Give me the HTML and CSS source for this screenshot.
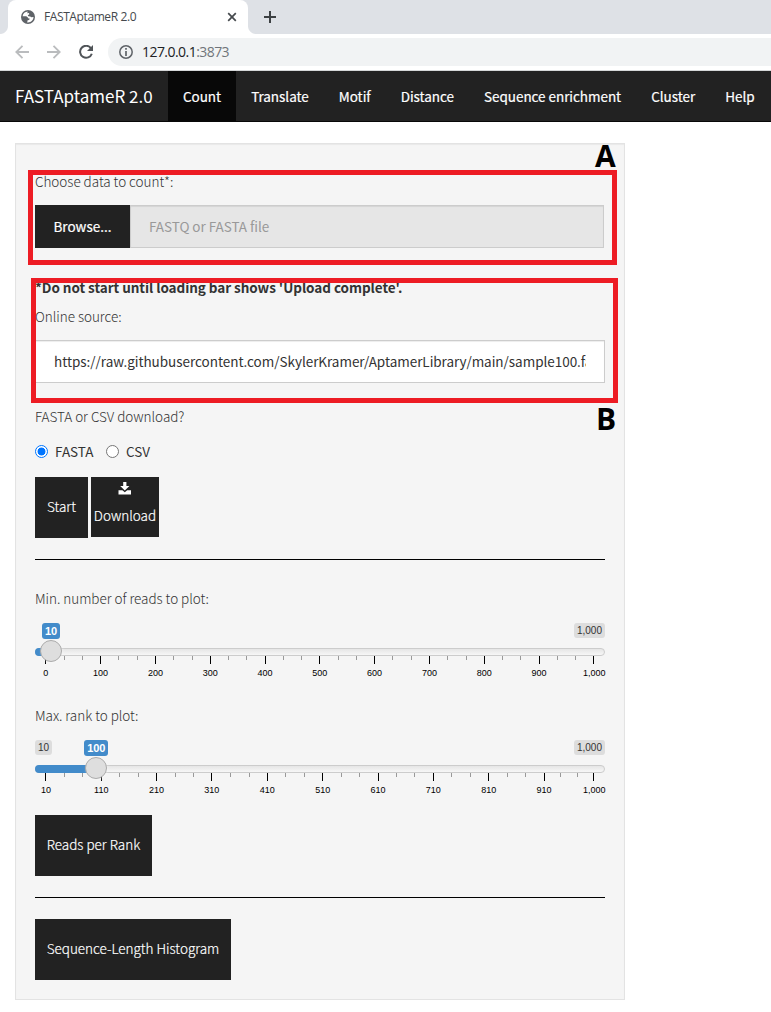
FILE: index.html
```html
<!DOCTYPE html>
<html lang="en">
<head>
<meta charset="utf-8">
<title>FASTAptameR 2.0</title>
<link rel="stylesheet" href="styles.css">
</head>
<body>
<div class="tabstrip">
  <div class="tab">
    <svg class="globe" width="14" height="14" viewBox="0 0 14 14"><circle cx="7" cy="7" r="7" fill="#5f6368"/><path d="M6.8 1.5C4 1.6 2 3.5 1.6 6.2L5.2 6.2 6.7 7.2 7 8.3 8.6 8.6 8.2 10 6.6 10.3 6.2 12.4C9.8 12.8 12.5 10.2 12.5 7L10.4 7.3 9.2 6.5 7.3 6.3 6.8 5.2 8.3 4.3 8 3 6.2 3.2Z" fill="#fff"/></svg>
    <span class="tab-title">FASTAptameR 2.0</span>
    <svg class="close" width="10" height="10" viewBox="0 0 10 10"><path d="M1.2 1.2 8.8 8.8M8.8 1.2 1.2 8.8" stroke="#45494d" stroke-width="1.7"/></svg>
  </div>
  <svg class="plus" width="12" height="12" viewBox="0 0 12 12"><path d="M6 0V12M0 6H12" stroke="#3c4043" stroke-width="2"/></svg>
</div>
<div class="toolbar">
  <svg width="14" height="14" viewBox="0 0 14 14" fill="none" stroke="#babcbe" stroke-width="1.8"><path d="M14 7H1.5M7.5 .8 1.3 7l6.2 6.2"/></svg>
  <svg class="forward" width="14" height="14" viewBox="0 0 14 14" fill="none" stroke="#babcbe" stroke-width="1.8"><path d="M0 7H12.5M6.5 .8 12.7 7l-6.2 6.2"/></svg>
  <svg class="reload" width="14" height="14" viewBox="0 0 14 14"><path d="M12 3.3A6 6 0 1 0 12.8 8.7" fill="none" stroke="#505458" stroke-width="2"/><path d="M14 0V6H8Z" fill="#505458"/></svg>
  <div class="omnibox">
    <svg width="14" height="14" viewBox="0 0 14 14"><circle cx="7" cy="7" r="6.2" fill="none" stroke="#5f6368" stroke-width="1.5"/><path d="M7 3V4.7M7 6V11" stroke="#5f6368" stroke-width="1.7"/></svg>
    <span class="url">127.0.0.1<span class="port">:3873</span></span>
  </div>
</div>
<nav class="navbar">
  <span class="brand">FASTAptameR 2.0</span>
  <a class="link active">Count</a><a class="link">Translate</a><a class="link">Motif</a><a class="link">Distance</a><a class="link">Sequence enrichment</a><a class="link">Cluster</a><a class="link">Help</a>
</nav>
<main class="well">
  <label class="label">Choose data to count*:</label>
  <div class="file">
    <span class="browse">Browse...</span>
    <span class="filename">FASTQ or FASTA file</span>
  </div>
  <strong class="note">*Do not start until loading bar shows 'Upload complete'.</strong>
  <label class="label source-label">Online source:</label>
  <div class="source"><span class="source-text">https://raw.githubusercontent.com/SkylerKramer/AptamerLibrary/main/sample100.fasta</span></div>
  <label class="label format-label">FASTA or CSV download?</label>
  <div class="radios">
    <span class="radio checked"></span><span class="radio-text fasta">FASTA</span>
    <span class="radio"></span><span class="radio-text">CSV</span>
  </div>
  <div class="actions">
    <button class="btn start">Start</button>
    <button class="btn download"><svg width="14" height="13" viewBox="0 0 14 13"><path d="M5.2 0H8.4V4H11.4L6.8 8.600 2.2 4H5.2ZM.5 8.300H4.400L6.800 10.300 9.200 8.300H13V12.5H.5Z" fill="#fff"/></svg><span>Download</span></button>
  </div>
  <hr class="rule">
  <label class="label min-label">Min. number of reads to plot:</label>
  <div class="slider">
    <div class="values"><span class="value current min-current">10</span><span class="value">1,000</span></div>
    <div class="track"><div class="fill" style="width:16px"></div><div class="handle" style="left:5px"></div></div>
    <svg class="ticks" width="580" height="26" viewBox="0 0 580 26">
      <path class="minor" d="M29.5 0v4M47.5 0v4M83.5 0v4M102.5 0v4M138.5 0v4M157.5 0v4M193.5 0v4M211.5 0v4M248.5 0v4M266.5 0v4M303.5 0v4M321.5 0v4M357.5 0v4M376.5 0v4M412.5 0v4M431.5 0v4M467.5 0v4M485.5 0v4M522.5 0v4M540.5 0v4"/>
      <path class="major" d="M10.5 0v8M65.5 0v8M120.5 0v8M175.5 0v8M230.5 0v8M284.5 0v8M339.5 0v8M394.5 0v8M449.5 0v8M504.5 0v8M558.5 0v8"/>
      <text x="10.8" y="20">0</text><text x="65.5" y="20">100</text><text x="120.5" y="20">200</text><text x="175.3" y="20">300</text><text x="230" y="20">400</text><text x="284.8" y="20">500</text><text x="339.5" y="20">600</text><text x="394.4" y="20">700</text><text x="449.3" y="20">800</text><text x="504" y="20">900</text><text x="559.2" y="20">1,000</text>
    </svg>
  </div>
  <label class="label max-label">Max. rank to plot:</label>
  <div class="slider">
    <div class="values"><span class="value">10</span><span class="value current max-current">100</span><span class="value">1,000</span></div>
    <div class="track"><div class="fill" style="width:61px"></div><div class="handle" style="left:50px"></div></div>
    <svg class="ticks" width="580" height="26" viewBox="0 0 580 26">
      <path class="minor" d="M29.5 0v4M47.5 0v4M84.5 0v4M103.5 0v4M140.5 0v4M158.5 0v4M195.5 0v4M214.5 0v4M250.5 0v4M269.5 0v4M306.5 0v4M324.5 0v4M361.5 0v4M379.5 0v4M416.5 0v4M435.5 0v4M472.5 0v4M490.5 0v4M525.5 0v4M542.5 0v4"/>
      <path class="major" d="M10.5 0v8M66.5 0v8M121.5 0v8M176.5 0v8M232.5 0v8M287.5 0v8M343.5 0v8M398.5 0v8M453.5 0v8M509.5 0v8M558.5 0v8"/>
      <text x="11" y="20">10</text><text x="66.3" y="20">110</text><text x="121.5" y="20">210</text><text x="176.7" y="20">310</text><text x="232.3" y="20">410</text><text x="287.7" y="20">510</text><text x="343" y="20">610</text><text x="398.3" y="20">710</text><text x="453.7" y="20">810</text><text x="509" y="20">910</text><text x="559.2" y="20">1,000</text>
    </svg>
  </div>
  <button class="btn ranks">Reads per Rank</button>
  <hr class="rule second">
  <button class="btn histogram">Sequence-Length Histogram</button>
</main>
<div class="callout callout-a"></div>
<div class="callout callout-b"></div>
<span class="letter letter-a">A</span>
<span class="letter letter-b">B</span>
</body>
</html>
```
FILE: styles.css
```css
* { box-sizing: border-box; }
body { margin: 0; width: 771px; height: 1012px; overflow: hidden; position: relative; background: #fff; font: 13.5px/20px "Noto Sans CJK SC", "Noto Sans", sans-serif; color: #333; white-space: nowrap; }
svg { display: block; flex: none; }

.tabstrip { height: 34px; background: #dee1e6; display: flex; align-items: flex-start; padding-left: 8px; }
.tab { position: relative; width: 240px; height: 34px; background: #fff; border-radius: 8px 8px 0 0; display: flex; align-items: center; padding-left: 13px; }
.tab::before, .tab::after { content: ""; position: absolute; bottom: 0; width: 8px; height: 8px; }
.tab::before { left: -8px; background: radial-gradient(circle at 0 0, #dee1e6 7.5px, #fff 8.5px); }
.tab::after { right: -8px; background: radial-gradient(circle at 100% 0, #dee1e6 7.5px, #fff 8.5px); }
.tab-title { font: 12px/16px "Open Sans", sans-serif; letter-spacing: -.4px; width: 183px; margin-left: 9px; color: #45494d; }
.plus { margin: 11px 0 0 16px; }

.toolbar { height: 37px; border-bottom: 1px solid #d5d7d8; display: flex; align-items: center; padding-left: 15px; }
.forward { margin-left: 18px; }
.reload { margin-left: 18px; }
.omnibox { flex: 1; height: 28px; margin-left: 15px; padding-left: 11px; border-radius: 14px 0 0 14px; background: #f1f3f4; display: flex; align-items: center; }
.url { margin-left: 9px; font: 14px/20px "Open Sans", sans-serif; letter-spacing: -.55px; color: #202124; }
.port { color: #70757a; }

.navbar { height: 51px; background: #222; border-bottom: 1px solid #080808; display: flex; color: #fff; line-height: 50px; }
.brand { flex: none; width: 168px; padding-left: 15px; font-size: 17px; }
.link { flex: none; padding: 0 15px; letter-spacing: -.04px; -webkit-text-stroke: .2px #fff; }
.active { background: #080808; }

.well { width: 610px; height: 857px; margin: 21px 0 0 15px; padding: 28px 19px 0; border: 1px solid #e3e3e3; background: #f5f5f5; box-shadow: inset 0 1px 1px rgba(0,0,0,.05); display: flex; flex-direction: column; }
.label { font-weight: 300; height: 20px; line-height: 18px; letter-spacing: -.03px; }
.file { display: flex; height: 43px; margin-top: 13px; width: 569px; line-height: 42px; }
.browse { width: 95px; background: #222; color: #fff; -webkit-text-stroke: .2px #fff; text-align: center; }
.filename { flex: 1; border: 1px solid #ccc; background: #e6e6e6; color: #999; padding-left: 18px; line-height: 40px; letter-spacing: -.04px; box-shadow: inset 0 1px 1px rgba(0,0,0,.075); }
.note { margin-top: 30px; height: 20px; line-height: 18px; font-weight: 700; letter-spacing: -.05px; }
.source-label { margin-top: 9px; }
.source { height: 43px; margin-top: 13px; border: 1px solid #ccc; background: #fff; padding: 0 18px; line-height: 41px; box-shadow: inset 0 1px 1px rgba(0,0,0,.075); }
.source-text { display: block; overflow: hidden; letter-spacing: -.035px; }
.format-label { margin-top: 24px; }
.radios { display: flex; align-items: center; height: 20px; margin-top: 14px; }
.radio { width: 13px; height: 13px; border: 1px solid #767676; border-radius: 50%; background: #fff; }
.checked { border-color: #0075ff; background: radial-gradient(circle, #0075ff 3.6px, #fff 4.3px); }
.radio-text { margin-left: 7px; }
.fasta { width: 51px; }
.actions { display: flex; gap: 3px; height: 61px; margin-top: 16px; align-items: flex-start; }
.btn { margin: 0; padding: 0 0 3px; border: 0; background: #222; color: #fff; font: 300 13.5px/20px "Noto Sans CJK SC", sans-serif; letter-spacing: -.01px; -webkit-text-stroke: .2px #fff; height: 61px; flex: none; }
.start { width: 53px; }
.download { width: 68px; height: 60px; display: flex; flex-direction: column; align-items: center; padding-top: 5px; }
.download span { margin-top: 10px; }
.rule { width: 570px; height: 1px; border: 0; background: #000; margin: 21px 0 0; flex: none; }
.min-label { margin-top: 29px; }
.max-label { margin-top: 24px; }

.slider { height: 73px; padding-top: 14px; width: 570px; }
.values { display: flex; height: 16px; justify-content: space-between; }
.value { height: 15px; padding: 0 3px; border-radius: 3px; background: #ddd; color: #333; font: 10px/15px "Liberation Sans", sans-serif; }
.current { height: 16px; background: #428bca; color: #fff; font-weight: 700; font-size: 11px; line-height: 16px; }
.min-current { margin-left: 7px; }
.max-current { margin: 0 auto 0 32px; }
.track { position: relative; height: 8px; margin-top: 9px; border: 1px solid #ccc; border-radius: 8px; background: linear-gradient(#ddd -50%, #fff 150%); }
.fill { height: 8px; margin: -1px; border-radius: 8px 0 0 8px; background: #428bca; }
.handle { position: absolute; top: -9px; width: 22px; height: 22px; margin-left: -1px; border: 1px solid #ababab; border-radius: 50%; background: #dedede; box-shadow: 1px 1px 3px rgba(255,255,255,.3); }
.ticks { font: 9px "Liberation Sans", sans-serif; text-anchor: middle; fill: #000; }
.minor { stroke: #999; }
.major { stroke: #000; }
.ranks { width: 117px; margin-top: 16px; }
.second { margin-top: 21px; }
.histogram { width: 196px; margin-top: 21px; }

.callout { position: absolute; border: 5px solid #ed1c24; }
.callout-a { left: 28px; top: 170px; width: 589px; height: 95px; }
.callout-b { left: 31px; top: 278px; width: 587px; height: 125px; }
.letter { position: absolute; font: 700 30px/31px "Open Sans", sans-serif; color: #000; }
.letter-a { left: 595px; top: 140px; }
.letter-b { left: 596px; top: 403px; }
```
